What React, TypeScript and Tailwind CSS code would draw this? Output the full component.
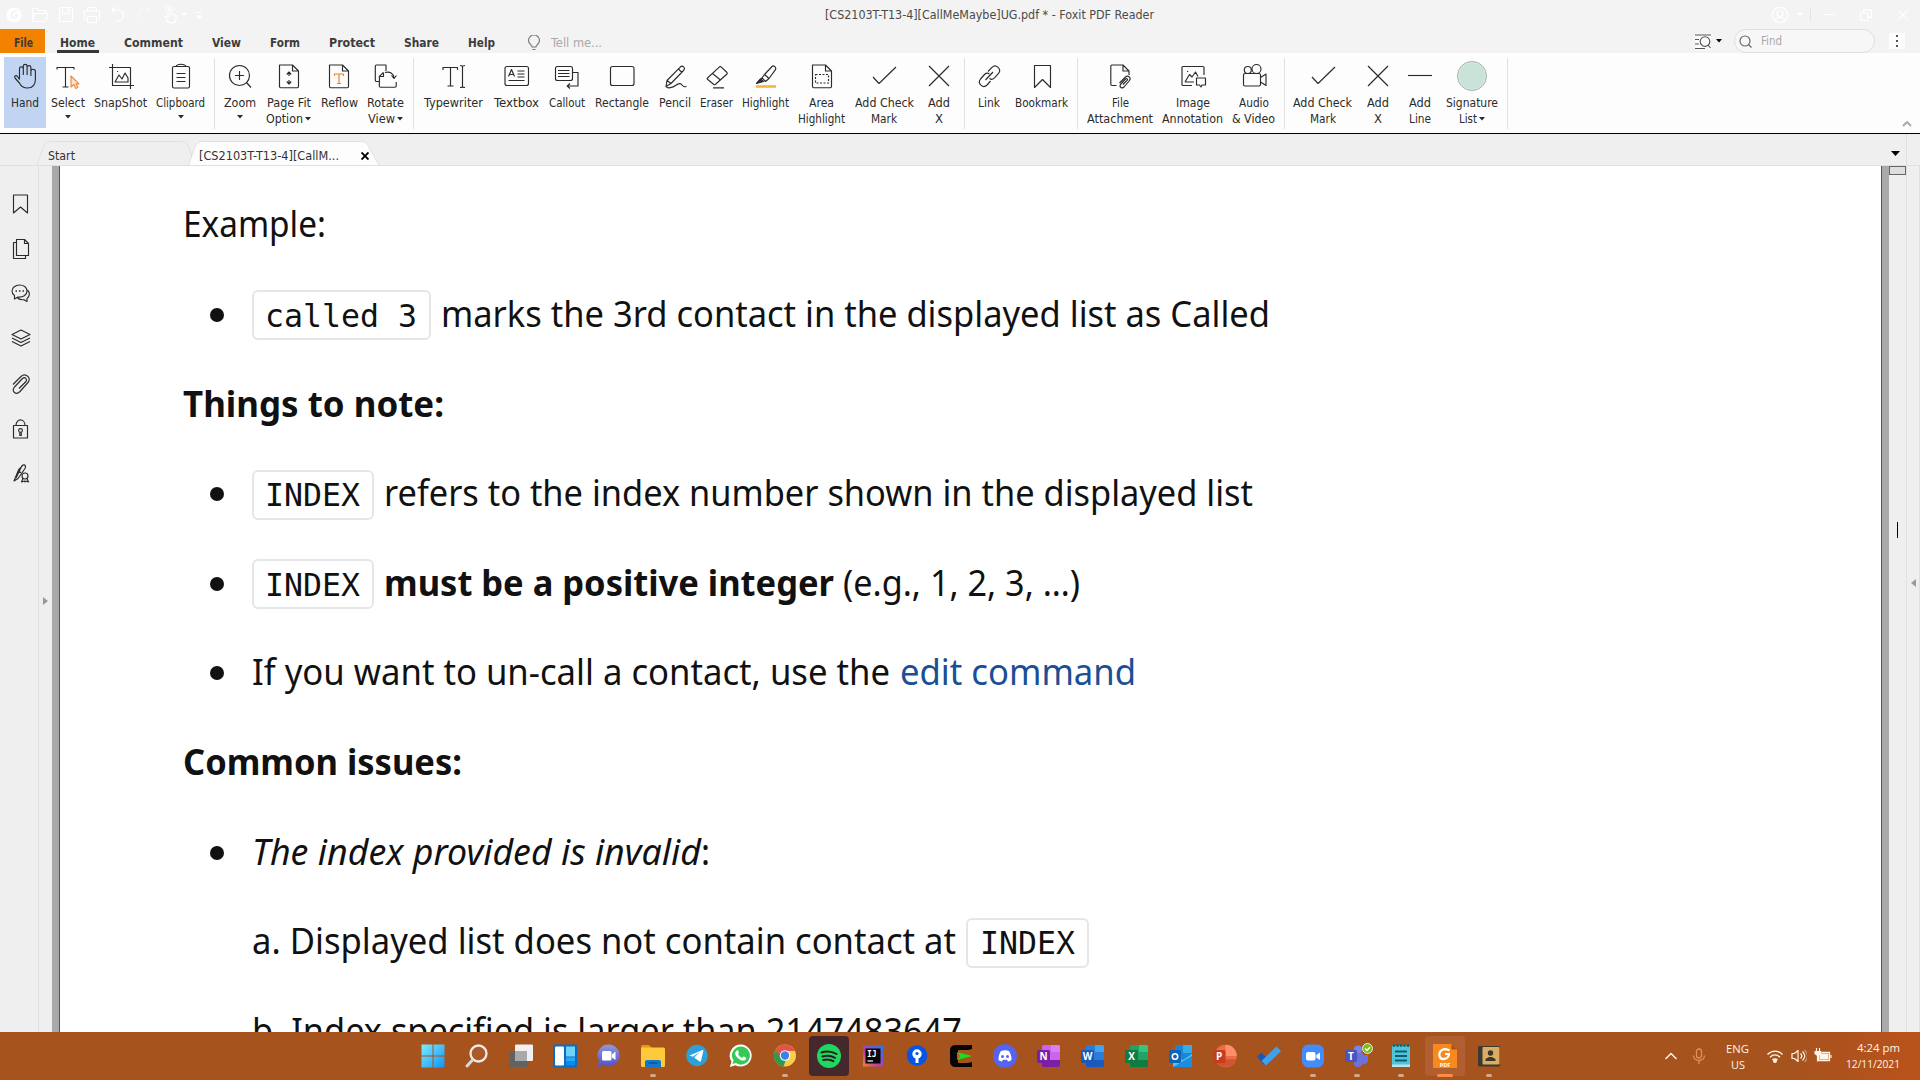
import { useLayoutEffect, useRef, useState } from "react";
import type { ReactNode } from "react";

/* Text that is condensed or widened horizontally to take exactly `w` pixels. */
function Fit({ w, children, className = "" }: { w: number; children: ReactNode; className?: string }) {
  const ref = useRef<HTMLSpanElement>(null);
  const [scale, setScale] = useState(1);
  useLayoutEffect(() => {
    if (ref.current && ref.current.offsetWidth) setScale(w / ref.current.getBoundingClientRect().width);
  }, [w]);
  return (
    <span className={"inline-block shrink-0 whitespace-nowrap " + className} style={{ width: w }}>
      <span ref={ref} className="inline-block origin-left whitespace-nowrap" style={{ transform: scale === 1 ? undefined : `scaleX(${scale})` }}>
        {children}
      </span>
    </span>
  );
}

function Svg({ children, size = 28, className = "", sw = 1.15 }: { children: ReactNode; size?: number; className?: string; sw?: number }) {
  return (
    <svg width={size} height={size} viewBox={`0 0 ${size} ${size}`} fill="none" stroke="currentColor" strokeWidth={sw} strokeLinejoin="round" className={"shrink-0 " + className}>
      {children}
    </svg>
  );
}

const Caret = ({ className = "" }: { className?: string }) => (
  <svg width="6" height="4" viewBox="0 0 6 4" className={"shrink-0 " + className}>
    <path d="M0 0h6L3 3.5z" fill="currentColor" />
  </svg>
);

const checkIcon = <path d="M3 15l6 6.5L26 5" />;
const crossIcon = <path d="M4 4l20 20M24 4L4 24" />;

const icons: Record<string, ReactNode> = {
  hand: (
    <path d="M8.500 17.500V6.800a1.900 1.900 0 0 1 3.800 0V13M12.300 7V4.300a1.900 1.900 0 0 1 3.800 0V13M16.100 5.500a1.900 1.900 0 0 1 3.800 0V14M19.900 9.500a2 2 0 0 1 4.500 0V17c0 6-3 9-8 9-4.500 0-6.500-2-8-5L4 16c-1-2 1-3.200 2.400-1.700L8.500 17.500" />
  ),
  select: (
    <>
      <path d="M3 7.500V5.500h17v2M11.500 5.500V25M8.500 25h6" />
      <path d="M17 14v11l2.800-2.500 2 4 2-1-1.800-3.700h3z" stroke="#ee8a3a" fill="#fce3cf" />
    </>
  ),
  snapshot: (
    <>
      <path d="M2 5.500h21.500V27M5.500 2v21.500H27" />
      <path d="M8 20l4-7 3 4 3-6 3 5v4zM10 9.500h1" />
    </>
  ),
  clipboard: (
    <>
      <rect x="5.500" y="4.500" width="17" height="21.500" rx="1.500" />
      <path d="M9 4.500c1-3 9-3 10 0M9.500 11.500h9M9.500 15.500h9M9.500 19.500h9" />
    </>
  ),
  zoom: (
    <>
      <circle cx="13.500" cy="13.500" r="10" />
      <path d="M20.500 20.500l4.500 5M9 13.500h9M13.500 9v9" />
    </>
  ),
  pagefit: (
    <>
      <path d="M4.500 3h13l6 6v15.500a1.200 1.200 0 0 1-1.200 1.200H5.700a1.200 1.200 0 0 1-1.200-1.200zM17.500 3v6h6" />
      <path d="M14 10v4M14 22v-4M11.800 12.500l2.200-2.500 2.200 2.500M11.800 19.500L14 22l2.200-2.500" />
    </>
  ),
  reflow: (
    <>
      <path d="M4.500 3h13l6 6v15.500a1.200 1.200 0 0 1-1.200 1.200H5.700a1.200 1.200 0 0 1-1.200-1.200zM17.500 3v6h6" />
      <path d="M9.500 14v-2h9v2M14 12v9.500M12 21.500h4" stroke="#ee8020" />
    </>
  ),
  rotate: (
    <>
      <path d="M8.500 19.500H5.500a1.200 1.200 0 0 1-1.200-1.200V4.200A1.200 1.200 0 0 1 5.500 3H15v6M8.500 14.500l-.2 9.500a1.200 1.200 0 0 0 1.200 1.200H24a1.200 1.200 0 0 0 1.200-1.200V20" />
      <path d="M8.400 15.500v-1.200l4-3.800M12.500 10.500v4H8.500M14 10.500c5-1.500 8.500 1 9 5.500M20.500 13.500L23 16.500l2.500-3" />
    </>
  ),
  typewriter: (
    <>
      <path d="M3 8V5.500h14.500V8M10.500 5.500V24M7.500 24h6" />
      <path d="M22.500 4v21M20 3.500c1.500 0 2.500.5 2.500 1 0-.5 1-1 2.500-1M20 25.500c1.500 0 2.500-.5 2.500-1 0 .5 1 1 2.500 1" />
    </>
  ),
  textbox: (
    <>
      <rect x="2" y="4.500" width="23.500" height="19" rx="2" />
      <path d="M5.500 14.500l3-7 3 7M6.500 12.500h4M14.500 9h7M14.500 12h7M14.500 15h7M5.500 18.500h16" />
    </>
  ),
  callout: (
    <>
      <rect x="2.500" y="4.500" width="17" height="14" rx="2" />
      <path d="M5 8.500h11.500M5 11.500h11.500M5 14.500h11.500M20 10.500h5v13.500H14.500M17 21.500l-2.800 2.500 2.800 2.500" />
    </>
  ),
  rectangle: <rect x="2.500" y="4.500" width="23.500" height="19" rx="2" />,
  pencil: (
    <path d="M6 18.500L19.500 4.800c2-1.800 5.200 1 3.500 3.200L10 21.500 5 24.500zM6 18.500l4 3M17.500 7l3.300 3.300M5 24.500c1.500 2.500 7 1 9.500-1 3.500-2.500 5.500-2.500 6.500-.5 1 1.500 3 2 4.500 1.500" />
  ),
  eraser: <path d="M4.500 16L16.500 4.800c.6-.5 1-.4 1.500 0l6 5.700c.5.6.5 1 0 1.500L12.500 22.300c-.6.500-1.500.5-2 0l-6-5c-.5-.5-.5-.9 0-1.300zM9.500 11.500l8 6.500M10 25.800h11" />,
  highlight: (
    <>
      <path d="M4 24.500h20" stroke="#f5b63e" strokeWidth="2.600" />
      <path d="M12.500 12.500l7.500-8c1.700-1.500 4.500.8 3.500 3.200L17 16.500zM12.500 12.500L10 16l3.500 3.500 3.500-3M9.800 16l-4.300 4.500" />
      <path d="M8.500 17l3 2.500-7 2z" fill="#333" />
    </>
  ),
  areahl: (
    <>
      <path d="M4.500 3h13l6 6v15.500a1.200 1.200 0 0 1-1.200 1.200H5.700a1.200 1.200 0 0 1-1.200-1.200zM17.500 3v6h6" />
      <rect x="7.500" y="12.500" width="13" height="8.500" strokeDasharray="2 1.500" />
    </>
  ),
  check: checkIcon,
  cross: crossIcon,
  link: (
    <path d="M13 9.500l4-4.200c4-4 10 2 6.500 6l-4 4.500c-2 2-4 1.500-5 .5M15.500 19l-3.500 4c-4 4-10-1.500-6.500-6l4-4.500c1.500-1.500 3.500-1.500 5-.5M10.500 18l7.500-8" />
  ),
  bookmark: <path d="M6.500 3.500h16V25.500l-8-8-8 8z" />,
  fileatt: (
    <>
      <path d="M10.500 23.500H6a1.200 1.200 0 0 1-1.200-1.200V4.200A1.200 1.200 0 0 1 6 3h11l6 6v4M17 3v6h6" />
      <path d="M13.500 21l6-6c2.500-2 6 .5 4 3.500l-5.500 6.500c-2 2-5 0-3.500-2.500l5-5.500c1.500-1 2.500.2 1.800 1.200L17 22.500" />
    </>
  ),
  image: (
    <>
      <path d="M13 23.500H4a1 1 0 0 1-1-1v-17a1 1 0 0 1 1-1h20a1 1 0 0 1 1 1V13M6 20h9M6 20l4.500-7.500L13 15l3.500-5 2.500 4.500M8 9.500h1.200" />
      <path d="M17.500 16h9v7h-3.500L22 25l-1.500-2h-3z" />
    </>
  ),
  video: (
    <>
      <rect x="3.500" y="11.500" width="17" height="12.500" rx="1.500" />
      <circle cx="7.800" cy="8" r="3.500" />
      <circle cx="16.500" cy="7" r="4.500" />
      <path d="M20.500 15.500l5.500-3.500v11.500l-5.500-3.500" />
    </>
  ),
  line: <path d="M2 13.500h24" />,
};

type Tool = { l: number; r: number; icon: string; text: [string, number][]; caret?: "below" | "inline" };

const tools: (Tool | number)[] = [
  { l: 11, r: 39, icon: "hand", text: [["Hand", 28]] },
  { l: 51, r: 85, icon: "select", text: [["Select", 34]], caret: "below" },
  { l: 94, r: 147, icon: "snapshot", text: [["SnapShot", 53]] },
  { l: 156, r: 205, icon: "clipboard", text: [["Clipboard", 49]], caret: "below" },
  214,
  { l: 224, r: 256, icon: "zoom", text: [["Zoom", 32]], caret: "below" },
  { l: 266, r: 311, icon: "pagefit", text: [["Page Fit", 44], ["Option", 37]], caret: "inline" },
  { l: 320, r: 358, icon: "reflow", text: [["Reflow", 37]] },
  { l: 366, r: 404, icon: "rotate", text: [["Rotate", 37], ["View", 27]], caret: "inline" },
  413,
  { l: 424, r: 483, icon: "typewriter", text: [["Typewriter", 59]] },
  { l: 494, r: 539, icon: "textbox", text: [["Textbox", 45]] },
  { l: 549, r: 585, icon: "callout", text: [["Callout", 36]] },
  { l: 595, r: 649, icon: "rectangle", text: [["Rectangle", 54]] },
  { l: 659, r: 691, icon: "pencil", text: [["Pencil", 32]] },
  { l: 700, r: 733, icon: "eraser", text: [["Eraser", 33]] },
  { l: 742, r: 789, icon: "highlight", text: [["Highlight", 47]] },
  { l: 798, r: 845, icon: "areahl", text: [["Area", 25], ["Highlight", 47]] },
  { l: 854, r: 914, icon: "check", text: [["Add Check", 59], ["Mark", 26]] },
  { l: 928, r: 950, icon: "cross", text: [["Add", 22], ["X", 8]] },
  964,
  { l: 978, r: 1000, icon: "link", text: [["Link", 22]] },
  { l: 1015, r: 1068, icon: "bookmark", text: [["Bookmark", 53]] },
  1077,
  { l: 1087, r: 1153, icon: "fileatt", text: [["File", 17], ["Attachment", 66]] },
  { l: 1162, r: 1223, icon: "image", text: [["Image", 34], ["Annotation", 61]] },
  { l: 1232, r: 1275, icon: "video", text: [["Audio", 30], ["& Video", 43]] },
  1284,
  { l: 1293, r: 1352, icon: "check", text: [["Add Check", 59], ["Mark", 26]] },
  { l: 1367, r: 1389, icon: "cross", text: [["Add", 22], ["X", 8]] },
  { l: 1409, r: 1431, icon: "line", text: [["Add", 22], ["Line", 22]] },
  { l: 1446, r: 1498, icon: "signature", text: [["Signature", 52], ["List", 18]], caret: "inline" },
  1507,
];

function Ribbon() {
  let x = 0;
  return (
    <div className="relative flex h-20 shrink-0 bg-[#fdfdfd]">
      <div className="absolute top-1 left-1 h-[71px] w-[42px] bg-[#c1d5f3]" />
      {tools.map((t, i) => {
        if (typeof t === "number") {
          const ml = t - x;
          x = t + 1;
          return <div key={i} className="mt-[5px] h-[71px] w-px shrink-0 bg-[#e0e0e0]" style={{ marginLeft: ml }} />;
        }
        const ml = t.l - x;
        x = t.r;
        return (
          <div key={i} className="relative flex shrink-0 flex-col items-center pt-[9px]" style={{ marginLeft: ml, width: t.r - t.l }}>
            {t.icon === "signature" ? (
              <div className="-mt-px mb-[-1px] size-[30px] shrink-0 rounded-full border border-[#9db5ab] bg-[#c9e3d9] shadow-[inset_0_0_0_1px_#dcede7]" />
            ) : (
              <Svg>{icons[t.icon]}</Svg>
            )}
            <div className="mt-[5px] flex flex-col items-center text-xs leading-4">
              {t.text.map(([s, w], k) => (
                <div key={k} className="flex h-4 items-center">
                  <Fit w={w}>{s}</Fit>
                  {k === 1 && t.caret === "inline" && <Caret className="ml-[2px]" />}
                </div>
              ))}
              {t.caret === "below" && <Caret className="mt-[4px]" />}
            </div>
          </div>
        );
      })}
      <div className="ml-auto flex items-end pr-2 pb-1">
        <Svg size={10} sw={2} className="text-[#a9a9a9]">
          <path d="M1 7l4-4 4 4" />
        </Svg>
      </div>
    </div>
  );
}

function TitleBar() {
  return (
    <div className="flex h-[29px] shrink-0 items-center bg-[#f3f3f3] text-white">
      <div className="flex w-[825px] items-center gap-2 pl-[6px]">
        <svg width="16" height="16" viewBox="0 0 16 16" className="mr-[1px]">
          <circle cx="8" cy="8" r="7.500" fill="#fff" />
          <path d="M11.500 4.500C7 3 4.500 7 6 10c1 2 5 1.500 5-2H8.500" fill="none" stroke="#f3f3f3" strokeWidth="1.700" />
        </svg>
        <Svg size={18}><path d="M1.500 15.500v-13h5l1.500 2h7v3M1.500 15.500L4 7.500h13l-2.500 8z" /></Svg>
        <Svg size={18}><path d="M2.500 1.500h13v14h-13zM5.500 1.500v6h7v-6M10.500 3v2.500" /></Svg>
        <Svg size={18}><path d="M4.500 5V1.500h9V5M4.500 13h-3V5h15v8h-3M4.500 10.500h9v6h-9z" /></Svg>
        <Svg size={18}><path d="M6 1L3 4l3 3M3 4h6c8 0 7 11 0 11H6" /></Svg>
        <Svg size={18} className="opacity-50"><path d="M12 1l3 3-3 3M15 4H9C1 4 2 15 9 15h3" /></Svg>
        <div className="flex items-center gap-0.5">
          <Svg size={18}><path d="M7 11V4a1.500 1.500 0 0 1 3 0v4l5 1v4c0 3-2 4-4 4s-4-1-5-3l-2-3c0-1 1.500-1.500 3 0M4.500 4.500a4 4 0 0 1 8 0" /></Svg>
          <Caret />
        </div>
        <Svg size={8}><path d="M1 1.500h6M2 5h4l-2 2z" /></Svg>
      </div>
      <Fit w={329} className="text-[12px] leading-4 text-[#4a4a4a]">[CS2103T-T13-4][CallMeMaybe]UG.pdf * - Foxit PDF Reader</Fit>
      <div className="ml-auto flex items-center pr-[12px]">
        <Svg size={18} className="mr-2">
          <circle cx="9" cy="9" r="7.700" /><circle cx="9" cy="7.500" r="3" /><path d="M4 14.500c1-4 9-4 10 0" />
        </Svg>
        <Caret />
        <div className="ml-[7px] h-3 w-px bg-[#e2e2e2]" />
        <div className="ml-3 h-px w-3 bg-white" />
        <Svg size={12} className="ml-[25px]"><path d="M.5 4h7.500v7.500H.5zM3.500 4V.800H11.500v7.500H8" /></Svg>
        <Svg size={10} className="ml-[26px]"><path d="M.5.500l9 9M9.500.500l-9 9" /></Svg>
      </div>
    </div>
  );
}

const menus: [string, number, number][] = [
  ["Home", 60, 35],
  ["Comment", 124, 59],
  ["View", 212, 29],
  ["Form", 270, 30],
  ["Protect", 329, 46],
  ["Share", 404, 35],
  ["Help", 468, 27],
];

function MenuBar() {
  let x = 45;
  return (
    <div className="flex h-6 shrink-0 bg-[#f3f3f3] text-[12px] leading-[28px] font-bold text-[#3c3c3c]">
      <div className="flex w-[45px] justify-center bg-[#f28200] pl-[2px]">
        <Fit w={19}>File</Fit>
      </div>
      {menus.map(([s, l, w], i) => {
        const ml = l - x;
        x = l + w;
        return (
          <div key={s} className="relative shrink-0" style={{ marginLeft: ml }}>
            <Fit w={w}>{s}</Fit>
            {i === 0 && <div className="absolute -left-[3px] bottom-0 h-[3px] w-[42px] bg-[#383838]" />}
          </div>
        );
      })}
      <Svg size={16} className="mt-[6px] ml-[31px] text-[#777]">
        <path d="M6 12c0-2-3.500-3-3.500-6.500a5.500 5.500 0 0 1 11 0C13.500 9 10 10 10 12zM6.500 14.500h3" />
      </Svg>
      <Fit w={51} className="ml-[9px] font-normal text-[#a9a9a9]">Tell me...</Fit>
      <div className="ml-auto flex items-start pr-[15px]">
        <Svg size={16} className="mt-[5px] bg-[#fbfbfb] text-[#555]">
          <path d="M0 1h16M0 5.500h4M0 10h4M0 14.500h10" /><circle cx="10" cy="7.500" r="4.800" /><path d="M13 11l2.500 3" />
        </Svg>
        <Caret className="mt-[10px] ml-[5px] text-black" />
        <div className="ml-3 flex h-6 w-[141px] items-center rounded-full border border-[#dedede] bg-[#f7f7f7] pl-[4px]">
          <Svg size={13} className="text-[#666]"><circle cx="6" cy="6" r="5" /><path d="M9.500 9.500l3 3" /></Svg>
          <Fit w={21} className="ml-[9px] font-normal text-[#a9a9a9]">Find</Fit>
        </div>
        <div className="mt-1 ml-[14px] flex size-4 flex-col items-center justify-center gap-[3px] bg-[#fdfdfd]">
          <div className="size-[2px] bg-[#555]" />
          <div className="size-[2px] bg-[#555]" />
          <div className="size-[2px] bg-[#555]" />
        </div>
      </div>
    </div>
  );
}

function TabBar() {
  return (
    <div className="flex h-[31px] shrink-0 bg-[#efefef] text-xs text-[#333]">
      <div className="relative mt-[7px] ml-[30px] h-6 w-[350px] shrink-0">
        <svg width="350" height="24" viewBox="0 0 350 24" className="absolute inset-0" fill="none" stroke="#e0e0e0">
          <path d="M7 24l6-16.500C15 2 17 .5 21 .5H151c4 0 6 1.500 8 6.500l3 8" />
          <path d="M158.500 24l6-16.500c2-5 4-7 8-7h159c4 0 6 2 8 7l9.500 16.500" fill="#fdfdfd" />
        </svg>
        <div className="relative flex h-full items-center pt-[5px] pl-[18px]">
          <Fit w={27}>Start</Fit>
          <Fit w={140} className="ml-[124px]">[CS2103T-T13-4][CallM...</Fit>
          <Svg size={8} sw={1.900} className="ml-[22px] text-black"><path d="M.5.500l7 7M7.500.500l-7 7" /></Svg>
        </div>
      </div>
      <div className="ml-auto flex w-[38px] items-center justify-end border-r border-[#e0e0e0] pr-[6px]">
        <svg width="9" height="5" viewBox="0 0 9 5" className="mt-2"><path d="M0 0h9L4.500 5z" /></svg>
      </div>
      <div className="mr-px w-3" />
    </div>
  );
}

const sideIcons: ReactNode[] = [
  <path d="M3.500 2h14v18l-7-6-7 6z" />,
  <path d="M6.500 1.500h8l4 4V17.500h-12zM14.500 1.500v4h4M6.500 4.500h-3V20.500h12v-3" />,
  <>
    <path d="M4.500 12.500v3.500l3.500-2c5 .5 9-2 9-6S13.500 2 9.500 2 2 4.500 2 8c0 2 1 3.500 2.500 4.500zM17.500 7c3 3 2 6.500-.5 8.500v3l-3-1.800c-3 .3-5-.4-6.500-1.700" />
    <path d="M5.500 8h1.500M9 8h1.500M12.500 8H14" strokeWidth="1.600" />
  </>,
  <path d="M11 2l9 4.500-9 4.500-9-4.500zM2 10l9 4.500 9-4.500M2 13.500l9 4.500 9-4.500" />,
  <path d="M3 11.500l8-8c4.500-4 11 1.500 7 6L10 18.500c-4 4-9 0-5.500-4.500l8-8.500c2.500-2 5 .5 3.500 3L9 15.500" />,
  <>
    <path d="M3.500 7.500h14v12.500h-14zM6 7.500c0-7.500 9-7.500 9 0" />
    <circle cx="10.500" cy="12.500" r="1.900" /><path d="M9.800 14.500v3h1.500v-3" />
  </>,
  <>
    <path d="M4 18L8.500 7l4.500-5c2.500-.5 3 1.500 2 3.500L8 15.500zM12 2.500L6 15M8 8l3 1.500" />
    <circle cx="15" cy="13" r="3" /><path d="M13 15.500L11.500 19l3-1 .5 1 .8-1 2.700 1-1.500-3.500" />
  </>,
];

function Chip({ w, t, tw }: { w: number; t: string; tw: number }) {
  return (
    <span
      className="mt-[5px] flex h-[50px] shrink-0 items-center justify-center rounded-[6px] border-2 border-[#e6e6e6] pt-[3px] pr-px font-['DejaVu_Sans_Mono'] text-[31.500px] leading-none"
      style={{ width: w }}
    >
      <Fit w={tw}>{t}</Fit>
    </span>
  );
}

function Row({ bullet, indent, children }: { bullet?: boolean; indent?: boolean; children: ReactNode }) {
  return (
    <div className="flex h-[89.600px] shrink-0 items-center">
      {bullet && <span className="mt-[4px] mr-[35px] ml-[27px] size-[14px] shrink-0 rounded-full bg-[#111]" />}
      {indent && <span className="w-[69px] shrink-0" />}
      {bullet && <span className="-ml-[7px] w-0" />}
      {children}
    </div>
  );
}

function Page() {
  return (
    <div className="flex grow flex-col overflow-hidden bg-white pt-[12.600px] pl-[123px] font-['Noto_Sans'] text-[36.500px] leading-[50px] text-[#111]">
      <Row><Fit w={143}>Example:</Fit></Row>
      <Row bullet>
        <Chip w={179} t="called 3" tw={152} />
        <Fit w={829} className="ml-[10px]">marks the 3rd contact in the displayed list as Called</Fit>
      </Row>
      <Row><Fit w={261} className="font-bold">Things to note:</Fit></Row>
      <Row bullet>
        <Chip w={122} t="INDEX" tw={95} />
        <Fit w={869} className="ml-[10px]">refers to the index number shown in the displayed list</Fit>
      </Row>
      <Row bullet>
        <Chip w={122} t="INDEX" tw={95} />
        <Fit w={450} className="ml-[10px] font-bold">must be a positive integer</Fit>
        <Fit w={237} className="ml-[9px]">(e.g., 1, 2, 3, …)</Fit>
      </Row>
      <Row bullet>
        <Fit w={638}>If you want to un-call a contact, use the</Fit>
        <Fit w={236} className="ml-[10px] text-[#1a4f95]">edit command</Fit>
      </Row>
      <Row><Fit w={279} className="font-bold">Common issues:</Fit></Row>
      <Row bullet>
        <Fit w={449} className="italic">The index provided is invalid</Fit>
        <Fit w={9}>:</Fit>
      </Row>
      <Row indent>
        <Fit w={704}>a. Displayed list does not contain contact at</Fit>
        <span className="w-[10px]" />
        <Chip w={123} t="INDEX" tw={95} />
      </Row>
      <Row indent><Fit w={710}>b. Index specified is larger than 2147483647</Fit></Row>
    </div>
  );
}

function Office({ c, d, l, letter }: { c: string; d: string; l: string; letter: string }) {
  return (
    <svg width="24" height="24" viewBox="0 0 24 24">
      <rect x="5" y="1" width="18" height="22" rx="1.500" fill={c} />
      <path d="M14 1h7.500A1.500 1.500 0 0 1 23 2.500V8h-9z" fill={l} />
      <path d="M5 16h18v5.500a1.500 1.500 0 0 1-1.500 1.500h-15A1.500 1.500 0 0 1 5 21.500z" fill={d} />
      <rect x="0" y="6" width="13" height="13" rx="1.500" fill={d} />
      <text x="6.500" y="16" textAnchor="middle" fontSize="10" fontWeight="700" fontFamily="Open Sans" fill="#fff">{letter}</text>
    </svg>
  );
}

const I = ({ children }: { children: ReactNode }) => (
  <svg width="24" height="24" viewBox="0 0 24 24" className="overflow-visible">{children}</svg>
);

const apps: { icon: ReactNode; dot?: boolean; bg?: string; active?: boolean }[] = [
  {
    icon: (
      <I>
        <defs><linearGradient id="win" x1="0" y1="0" x2="1" y2="1"><stop offset="0" stopColor="#7eecff" /><stop offset="1" stopColor="#1192f5" /></linearGradient></defs>
        <path d="M.5.500h11v11H.5zM12.500.500h11v11h-11zM.5 12.500h11v11H.5zM12.500 12.500h11v11h-11z" fill="url(#win)" />
      </I>
    ),
  },
  { icon: <I><circle cx="13.500" cy="9.500" r="8" fill="#b9745036" stroke="#efe9e6" strokeWidth="2.300" /><path d="M7.500 16L2 22" stroke="#d9d9d9" strokeWidth="3" strokeLinecap="round" /></I> },
  { icon: <I><rect x="0" y="7" width="18" height="16" rx="1" fill="#626262" /><rect x="6" y="0.500" width="18" height="16.500" rx="1" fill="#f0f0f2" /><rect x="6" y="7" width="12" height="10" fill="#a9a9a9" /></I> },
  { icon: <I><rect width="24" height="23" y=".5" rx="1.500" fill="#0c6bc2" /><rect x="2" y="2.500" width="9" height="19" rx="1" fill="#fff" /><path d="M13 2.500h9v10h-9z" fill="#6ad4fb" /><path d="M13 13.500h9v8h-9z" fill="#0a8bee" /><path d="M13 13.500h9v3.500h-9z" fill="#28a8fa" /></I> },
  {
    icon: (
      <I>
        <defs><linearGradient id="chat" x1="0" y1="0" x2="0" y2="1"><stop offset="0" stopColor="#8f98dd" /><stop offset="1" stopColor="#5450c4" /></linearGradient></defs>
        <path d="M12 .5a11 11 0 1 1-5 21L1 23l1-6A11 11 0 0 1 12 .5z" fill="url(#chat)" />
        <rect x="5" y="7" width="9.500" height="9.500" rx="1.500" fill="#fff" /><path d="M15 10.500l3.500-3v8.500L15 13.500z" fill="#fff" />
      </I>
    ),
  },
  { dot: true, icon: <I><path d="M0 2.500A1.500 1.500 0 0 1 1.500 1H8l2.500 2.500V6H0z" fill="#e0a100" /><rect y="3.500" width="24" height="19.500" rx="1.500" fill="#fcca3a" /><path d="M4 23v-5a2 2 0 0 1 2-2h12a2 2 0 0 1 2 2v5z" fill="#1378cb" /><path d="M7.500 19h9" stroke="#0b4d8f" strokeWidth="1.200" /></I> },
  { icon: <I><circle cx="12" cy="11.500" r="10.700" fill="#2ba0da" /><path d="M4.500 11.500L17.500 6c.8-.2 1 .2.800 1L16 17c-.3.800-.8.900-1.400.5l-5.500-4 6-5.500-7.500 4.800z" fill="#fff" /></I> },
  { icon: <I><path d="M12 .5a11 11 0 1 1-5.500 20.700L.8 23l1.700-5.500A11 11 0 0 1 12 .5z" fill="#fff" /><path d="M12 2.500a9 9 0 1 1-5 16.500l-3.500 1 1.100-3.400A9 9 0 0 1 12 2.500z" fill="#35c955" /><path d="M8 6.500c.8-.4 1.200 0 1.800 1.800.3.900-.8 1.500-.6 2 .6 1.300 2 2.700 3.800 3.400.8.100 1.100-1.400 1.800-1.200 2 .9 2.500 1.100 2.300 1.900-.6 2.200-2.900 2.600-5.600 1.500-2.700-1.200-4.500-3.300-5.200-5.400C5.800 8.800 6.700 7 8 6.500z" fill="#fff" /></I> },
  { dot: true, icon: <I><circle cx="12" cy="11.500" r="11" fill="#f9cf4a" /><path d="M2.500 6a11 11 0 0 1 19-0l.5 1H12L7 14z" fill="#e0544a" /><path d="M2.500 6L8.500 14.500 12.500 17l-2 5.500A11 11 0 0 1 2.500 6z" fill="#2c9a50" /><circle cx="12" cy="11.500" r="5.200" fill="#fff" /><circle cx="12" cy="11.500" r="4.200" fill="#3f7fec" /></I> },
  { bg: "bg-[#45282b]", icon: <I><circle cx="12" cy="12" r="12" fill="#1ed760" /><path d="M4.500 8.500c5-1.500 10.500-1 15 1.500M5.500 12.500c4.500-1.200 8.500-.8 12.500 1.300M6.200 16c3.500-.9 7-.6 10.200 1.200" stroke="#2d1c1e" strokeWidth="2" strokeLinecap="round" fill="none" /></I> },
  {
    icon: (
      <I>
        <defs><linearGradient id="ij" x1="0" y1="1" x2="1" y2="0"><stop offset="0" stopColor="#e98a36" /><stop offset=".4" stopColor="#c23ba0" /><stop offset="1" stopColor="#1b7cf0" /></linearGradient></defs>
        <rect x="2" y="1.500" width="20" height="21" fill="url(#ij)" /><rect x="4.500" y="4.500" width="15" height="15" fill="#080408" />
        <text x="6" y="12.500" fontSize="8" fontWeight="700" fontFamily="DejaVu Sans Mono" fill="#fff">IJ</text><path d="M6.500 17h5.500" stroke="#fff" strokeWidth="1.200" />
      </I>
    ),
  },
  { icon: <I><circle cx="12" cy="11.500" r="10.300" fill="#0755e2" /><circle cx="12" cy="10" r="4.700" fill="#fff" /><circle cx="12" cy="9.500" r="1.600" fill="#0755e2" /><path d="M10.500 14h3v5h-3z" fill="#fff" /></I> },
  { icon: <I><path d="M23 5V1H7C2 1 1 4 1 7v10c0 4 2 6 6 6h16v-5l-4 1H9V6h10z" fill="#050505" /><path d="M8 8l15 4-15 4 3-4z" fill="#1ae01a" /><path d="M8 8l3 4-3 4z" fill="#e54b20" /></I> },
  { icon: <I><circle cx="12" cy="12" r="12" fill="#5564ee" /><path d="M8 7c2.500-.9 5.500-.9 8 0 1.700 2.500 2.700 5.500 2.500 9-1 .8-2 1.200-3.500 1.500l-1-1.700h-4l-1 1.700c-1.500-.3-2.500-.7-3.500-1.500C5.300 12.500 6.300 9.500 8 7z" fill="#fff" /><circle cx="9.500" cy="12.500" r="1.500" fill="#5564ee" /><circle cx="14.500" cy="12.500" r="1.500" fill="#5564ee" /></I> },
  { icon: <Office c="#ca64ea" l="#d87ff2" d="#7b1fa5" letter="N" /> },
  { icon: <Office c="#2b7cd3" l="#41a5ee" d="#185abd" letter="W" /> },
  { icon: <Office c="#21a366" l="#33c481" d="#107c41" letter="X" /> },
  { icon: <I><rect x="6" y="1" width="17" height="14" rx="1.500" fill="#1a86d4" /><path d="M14 1h9v8h-9z" fill="#35abec" /><path d="M4 11l10 5 9-6v11.500a1.500 1.500 0 0 1-1.500 1.500H4z" fill="#50c4f4" /><path d="M4 23l19-11v9.500a1.500 1.500 0 0 1-1.500 1.500z" fill="#1b8fdd" /><rect y="6" width="12" height="13" rx="1.500" fill="#0d63b5" /><circle cx="6" cy="12.500" r="2.700" fill="none" stroke="#fff" strokeWidth="1.600" /></I> },
  { icon: <I><circle cx="12.500" cy="12" r="11.200" fill="#ed6c47" /><path d="M12.500.800A11.200 11.200 0 0 1 23.700 12H12.500z" fill="#ff8f6b" /><path d="M2 16a11.200 11.200 0 0 0 21-1z" fill="#d35230" /><rect y="6" width="12.500" height="13" rx="1.500" fill="#c43e1c" /><text x="6.200" y="16" textAnchor="middle" fontSize="10" fontWeight="700" fontFamily="Open Sans" fill="#fff">P</text></I> },
  { icon: <I><path d="M0 12.500l4.500-4 7 7.500-4.500 5z" fill="#1c57b5" /><path d="M19.500 2.500l4.500 4.500L9 21.500 4.500 17z" fill="#41a0ea" /></I> },
  { dot: true, icon: <I><rect x="1" y=".5" width="22" height="23" rx="6.500" fill="#448cfb" /><rect x="5" y="8" width="9.500" height="8.500" rx="2" fill="#fff" /><path d="M15.300 11l3.700-2.500v7.500l-3.700-2.500z" fill="#fff" /></I> },
  { dot: true, icon: <I><circle cx="13" cy="5.500" r="4" fill="#7b83eb" /><path d="M9 9h9v9a5 5 0 0 1-9 3zM18 11h5v6a4 4 0 0 1-5 3z" fill="#6b72dc" /><rect y="6" width="12" height="12" rx="1.500" fill="#4b53bc" /><text x="6" y="15.500" textAnchor="middle" fontSize="10" fontWeight="700" fontFamily="Open Sans" fill="#fff">T</text><circle cx="22.500" cy="4.500" r="5" fill="#7bbd15" stroke="#e8f0dc" strokeWidth="1" /><path d="M20 4.500l2 2 3-3.500" stroke="#fff" strokeWidth="1.500" fill="none" /></I> },
  { dot: true, icon: <I><rect x="3" y="2" width="18" height="21" rx="1" fill="#50c5d9" /><path d="M3 20.500h18V23H3z" fill="#b9e3ec" /><path d="M5 3V0M8.500 3V0M12 3V0M15.500 3V0M19 3V0" stroke="#0d6a7c" strokeWidth="1.800" /><path d="M6 7.500h12M6 12h12M6 16.500h12" stroke="#0c5f73" strokeWidth="1.800" /></I> },
  { active: true, bg: "bg-[#b15f31]", icon: <I><path d="M0 0h18.500L24 5.500V24H0z" fill="#f68a1e" /><path d="M18.500 0L24 5.500h-5.500z" fill="#a85410" /><path d="M16.500 6.500c-6-3.500-11 .5-10 5.500 1 4.500 9 4 9.500-2h-4" fill="none" stroke="#fff" strokeWidth="2.200" /><text x="12" y="23" textAnchor="middle" fontSize="5.500" fontWeight="700" fontFamily="Open Sans" fill="#fff">PDF</text></I> },
  { dot: true, icon: <I><rect x="1" y="2" width="22" height="20.500" rx="1.500" fill="#3c3935" /><rect x="5.500" y="3" width="17" height="17.500" rx="1" fill="#d9ae62" /><circle cx="13.500" cy="9" r="2.700" fill="#41352a" /><path d="M8.500 17v-2l3.500-2h3l3.500 2v2z" fill="#41352a" /></I> },
];

function Taskbar() {
  return (
    <div className="flex h-12 shrink-0 bg-[linear-gradient(90deg,#a6531e_0%,#a6531e_93%,#ba521b_100%)] pl-[411px] font-['Open_Sans'] text-[#fff4ea]">
      {apps.map((a, i) => (
        <div key={i} className="relative flex w-11 shrink-0 items-center justify-center">
          {a.bg && <div className={"absolute inset-x-[2px] top-1 h-10 rounded " + a.bg} />}
          <div className="relative">{a.icon}</div>
          {a.dot && <div className="absolute bottom-[3px] h-[3px] w-[6px] rounded-full bg-[#d5a78d]" />}
          {a.active && <div className="absolute bottom-[3px] h-[3px] w-4 rounded-full bg-[#ff8c42]" />}
        </div>
      ))}
      <div className="ml-auto flex items-center pr-5">
        <Svg size={14} sw={1.500}><path d="M1.500 10L7 4.500l5.500 5.500" /></Svg>
        <Svg size={16} sw={1.300} className="ml-[13px] text-[#ea8d55]"><rect x="5.500" y="1" width="5" height="9" rx="2.500" /><path d="M2.500 7.500c0 6.500 11 6.500 11 0M8 12.500V16" /></Svg>
        <div className="ml-[19px] flex flex-col items-center pt-px text-[11.500px] leading-4">
          <Fit w={23}>ENG</Fit>
          <Fit w={14}>US</Fit>
        </div>
        <Svg size={16} sw={1.400} className="ml-[18px]"><path d="M0.500 6.500c4.500-4.500 10.500-4.500 15 0M3 9.300c3-3 7-3 10 0M5.500 12c1.500-1.500 3.500-1.500 5 0" /><circle cx="8" cy="13" r="1.300" fill="currentColor" /></Svg>
        <Svg size={16} sw={1.200} className="ml-2"><path d="M1 5.500h2.500L7 2.500v11l-3.500-3H1zM9.500 5.500c1.500 1.500 1.500 3.500 0 5M11.500 3.500c3 3 3 6 0 9" /><path d="M13.500 2c4 3.500 4 8.500 0 12" opacity=".4" /></Svg>
        <Svg size={18} className="ml-[7px]"><path d="M4.500 8v5.500h11v-8H8" strokeWidth="1.300" /><path d="M7 7h7v5H6V9z" fill="currentColor" /><path d="M17 8v3M2.500 1v3M5.500 1v3M1 4.500h6v2L4 9 1 6.500zM3.500 8v6.500" fill="currentColor" /></Svg>
        <div className="ml-[14px] flex flex-col items-end text-[11.500px] leading-4">
          <Fit w={43}>4:24 pm</Fit>
          <Fit w={54}>12/11/2021</Fit>
        </div>
      </div>
    </div>
  );
}

export default function App() {
  return (
    <div className="flex h-[1080px] w-[1920px] flex-col overflow-hidden bg-[#efefef] font-['DejaVu_Sans_Condensed','Noto_Sans',sans-serif] text-[#2b2b2b]">
      <TitleBar />
      <MenuBar />
      <Ribbon />
      <div className="h-px shrink-0 bg-black" />
      <TabBar />
      <div className="flex min-h-0 grow border-t border-[#e0e0e0]">
        <div className="flex w-[39px] shrink-0 flex-col items-center gap-[23px] border-r border-[#e0e0e0] pt-[27px] pl-[3px]">
          {sideIcons.map((ic, i) => (
            <Svg key={i} size={22}>{ic}</Svg>
          ))}
        </div>
        <div className="flex w-[13px] shrink-0 items-center justify-center pt-[3px]">
          <svg width="5" height="8" viewBox="0 0 5 8"><path d="M0 0l5 4-5 4z" fill="#999" /></svg>
        </div>
        <div className="w-2 shrink-0 border-r border-[#555] bg-[#a9a9a9]" />
        <Page />
        <div className="w-2 shrink-0 border-l border-[#555] bg-[#a9a9a9]" />
        <div className="flex w-[17px] shrink-0 flex-col items-center">
          <div className="h-[9px] w-[17px] border border-[#666] bg-[#dedede]" />
          <div className="mt-[347px] h-4 w-px bg-black" />
        </div>
        <div className="flex w-[14px] shrink-0 justify-center border-x border-[#e0e0e0]">
          <svg width="5" height="8" viewBox="0 0 5 8" className="mt-[413px]"><path d="M5 0L0 4l5 4z" fill="#999" /></svg>
        </div>
      </div>
      <Taskbar />
    </div>
  );
}
